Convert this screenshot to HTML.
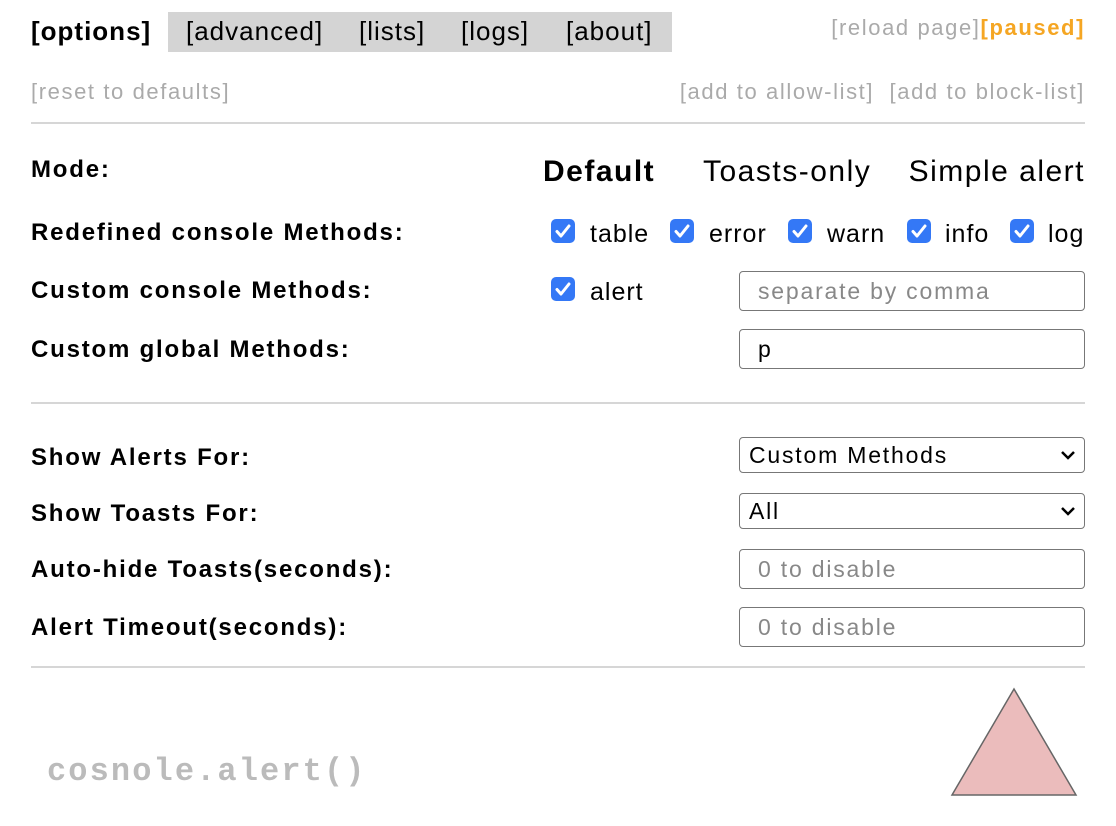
<!DOCTYPE html>
<html><head><style>
body{margin:0;width:1116px;height:826px;background:#fff;font-family:"Liberation Sans",Arial,sans-serif;position:relative;overflow:hidden}
.a{position:absolute;white-space:nowrap}
.t{font-size:26px;top:16px;letter-spacing:1px}
.g{color:#aaa;font-size:22px;letter-spacing:1.6px}
.l{font-weight:bold;font-size:24px;left:31px;letter-spacing:1.8px}
.hr{position:absolute;left:31px;width:1054px;height:2px;background:#d6d6d6}
.cb{position:absolute;width:24px;height:24px;background:#3478f6;border-radius:5px}
.cb svg{position:absolute;left:0;top:0}
.ct{position:absolute;font-size:25px;letter-spacing:1px}
.in{position:absolute;left:739px;width:344px;height:38px;border:1.5px solid #777;border-radius:4px;font-size:23px;line-height:38px;letter-spacing:1.8px}
.in span{padding-left:18px}
.ph{color:#888}
.sel{position:absolute;left:739px;width:344px;height:34px;border:1.5px solid #777;border-radius:4px;font-size:23px;line-height:34px;letter-spacing:1.8px}
.sel span{padding-left:9px}
.sel svg{position:absolute;right:8px;top:11px}
</style></head><body>
<div class="a" style="left:168px;top:12px;width:504px;height:40px;background:#d4d4d4"></div>
<div class="a t" style="left:31px;font-weight:bold">[options]</div>
<div class="a t" style="left:186px">[advanced]</div>
<div class="a t" style="left:359px">[lists]</div>
<div class="a t" style="left:461px">[logs]</div>
<div class="a t" style="left:566px">[about]</div>
<div class="a g" style="right:31px;top:15px">[reload page]<span style="color:#f5a623;font-weight:bold">[paused]</span></div>
<div class="a g" style="left:31px;top:79px">[reset to defaults]</div>
<div class="a g" style="right:31px;top:79px">[add to allow-list]&nbsp; [add to block-list]</div>
<div class="hr" style="top:122px"></div>
<div class="a l" style="top:156px">Mode:</div>
<div class="a" style="left:543px;top:155px;font-size:30px;font-weight:bold;letter-spacing:1.5px">Default</div>
<div class="a" style="left:703px;top:155px;font-size:30px;letter-spacing:1.5px">Toasts-only</div>
<div class="a" style="right:31px;top:155px;font-size:30px;letter-spacing:1.5px">Simple alert</div>
<div class="a l" style="top:219px">Redefined console Methods:</div>
<div class="a l" style="top:277px">Custom console Methods:</div>
<div class="a l" style="top:336px">Custom global Methods:</div>

<div class="cb" style="left:551px;top:219px"><svg width="24" height="24"><path d="M6 12.5l4 4.5 8-10" stroke="#fff" stroke-width="3" fill="none" stroke-linecap="round" stroke-linejoin="round"/></svg></div>
<div class="ct" style="left:590px;top:220px">table</div>
<div class="cb" style="left:670px;top:219px"><svg width="24" height="24"><path d="M6 12.5l4 4.5 8-10" stroke="#fff" stroke-width="3" fill="none" stroke-linecap="round" stroke-linejoin="round"/></svg></div>
<div class="ct" style="left:709px;top:220px">error</div>
<div class="cb" style="left:788px;top:219px"><svg width="24" height="24"><path d="M6 12.5l4 4.5 8-10" stroke="#fff" stroke-width="3" fill="none" stroke-linecap="round" stroke-linejoin="round"/></svg></div>
<div class="ct" style="left:827px;top:220px">warn</div>
<div class="cb" style="left:907px;top:219px"><svg width="24" height="24"><path d="M6 12.5l4 4.5 8-10" stroke="#fff" stroke-width="3" fill="none" stroke-linecap="round" stroke-linejoin="round"/></svg></div>
<div class="ct" style="left:945px;top:220px">info</div>
<div class="cb" style="left:1010px;top:219px"><svg width="24" height="24"><path d="M6 12.5l4 4.5 8-10" stroke="#fff" stroke-width="3" fill="none" stroke-linecap="round" stroke-linejoin="round"/></svg></div>
<div class="ct" style="left:1048px;top:220px">log</div>
<div class="cb" style="left:551px;top:277px"><svg width="24" height="24"><path d="M6 12.5l4 4.5 8-10" stroke="#fff" stroke-width="3" fill="none" stroke-linecap="round" stroke-linejoin="round"/></svg></div>
<div class="ct" style="left:590px;top:278px">alert</div>

<div class="in" style="top:271px"><span class="ph">separate by comma</span></div>
<div class="in" style="top:329px"><span>p</span></div>
<div class="hr" style="top:402px"></div>
<div class="a l" style="top:444px">Show Alerts For:</div>
<div class="a l" style="top:500px">Show Toasts For:</div>
<div class="a l" style="top:556px">Auto-hide Toasts(seconds):</div>
<div class="a l" style="top:614px">Alert Timeout(seconds):</div>
<div class="sel" style="top:437px"><span>Custom Methods</span><svg width="16" height="12"><path d="M2 3l6 6 6-6" stroke="#000" stroke-width="2.5" fill="none"/></svg></div>
<div class="sel" style="top:493px"><span>All</span><svg width="16" height="12"><path d="M2 3l6 6 6-6" stroke="#000" stroke-width="2.5" fill="none"/></svg></div>
<div class="in" style="top:549px"><span class="ph">0 to disable</span></div>
<div class="in" style="top:607px"><span class="ph">0 to disable</span></div>
<div class="hr" style="top:666px"></div>
<div class="a" style="left:47px;top:753px;font-family:'Liberation Mono',monospace;font-size:32px;letter-spacing:2.1px;font-weight:bold;color:#bbb">cosnole.alert()</div>
<svg class="a" style="left:0;top:0" width="1116" height="826"><polygon points="1014,689 952,795 1076,795" fill="#ebbcbc" stroke="#666" stroke-width="1.5"/></svg>
</body></html>
